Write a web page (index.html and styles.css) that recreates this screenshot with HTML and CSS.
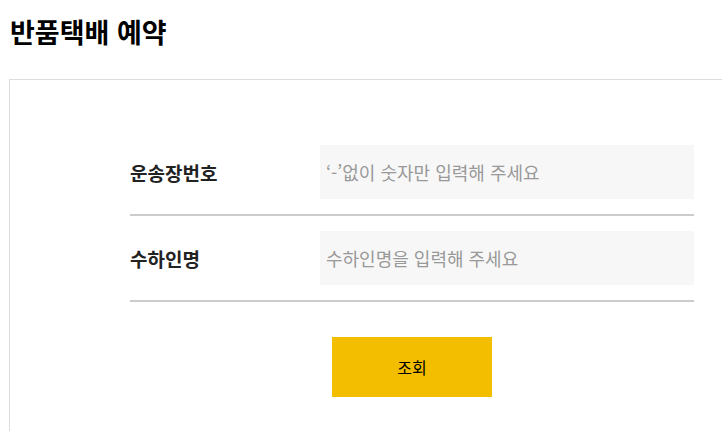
FILE: index.html
```html
<!DOCTYPE html>
<html lang="ko">
<head>
<meta charset="utf-8">
<link rel="stylesheet" href="styles.css">
</head>
<body>
<h1 class="title">반품택배 예약</h1>
<div class="panel">
  <form class="form">
    <div class="row">
      <label class="label">운송장번호</label>
      <input class="field" type="text" placeholder="‘-’없이 숫자만 입력해 주세요">
    </div>
    <div class="row">
      <label class="label">수하인명</label>
      <input class="field" type="text" placeholder="수하인명을 입력해 주세요">
    </div>
    <div class="actions">
      <button class="btn" type="button">조회</button>
    </div>
  </form>
</div>
</body>
</html>
```
FILE: styles.css
```css
html, body {
  margin: 0;
  padding: 0;
  background: #fff;
  overflow: hidden;
}
body {
  font-family: "Noto Sans CJK KR", "Noto Sans", sans-serif;
  color: #222;
  width: 722px;
  height: 431px;
}
.title {
  margin: 0;
  padding: 13px 0 0 10px;
  height: 79px;
  box-sizing: border-box;
  font-size: 27px;
  line-height: 38px;
  font-weight: 700;
  color: #000;
}
.panel {
  margin-left: 9px;
  width: 713px;
  height: 352px;
  border: 1px solid #ddd;
  border-right: 0;
  border-bottom: 0;
  box-sizing: border-box;
  padding: 50px 0 0 120px;
}
.form {
  width: 564px;
}
.row {
  display: flex;
  align-items: center;
  padding: 15px 0;
  border-bottom: 2px solid #ccc;
}
.label {
  width: 190px;
  font-size: 19px;
  font-weight: 700;
  color: #222;
}
.field {
  width: 374px;
  height: 54px;
  box-sizing: border-box;
  border: 0;
  background: #f7f7f7;
  padding: 0 6px;
  font-family: inherit;
  font-size: 18px;
  color: #333;
  outline: none;
}
.field::placeholder {
  color: #999;
}
.actions {
  display: flex;
  justify-content: center;
  padding-top: 35px;
}
.btn {
  width: 160px;
  height: 60px;
  border: 0;
  background: #f4be00;
  font-family: inherit;
  font-size: 16px;
  color: #000;
  cursor: pointer;
}
```
